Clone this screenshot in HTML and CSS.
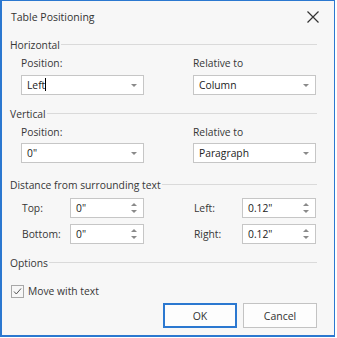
FILE: index.html
```html
<!DOCTYPE html>
<html lang="en">
<head>
  <meta charset="UTF-8">
  <link rel="stylesheet" href="styles.css">
</head>
<body>
  <div class="dialog">
    <div class="titlebar">
      <span class="title">Table Positioning</span>
      <svg class="close" width="12" height="12" viewBox="0 0 12 12">
        <path d="M0.5 0.5 L11.5 11.5 M11.5 0.5 L0.5 11.5" stroke="#333" stroke-width="1.2" fill="none"/>
      </svg>
    </div>

    <div class="content">
      <div class="group-head h-first"><span>Horizontal</span><i></i></div>
      <div class="pair">
        <div class="field">
          <label>Position:</label>
          <div class="combo"><span>Left<b class="caret"></b></span><em class="arrow"></em></div>
        </div>
        <div class="field">
          <label>Relative to</label>
          <div class="combo"><span>Column</span><em class="arrow"></em></div>
        </div>
      </div>

      <div class="group-head h-vert"><span>Vertical</span><i></i></div>
      <div class="pair pair-vert">
        <div class="field">
          <label>Position:</label>
          <div class="combo"><span>0"</span><em class="arrow"></em></div>
        </div>
        <div class="field">
          <label>Relative to</label>
          <div class="combo"><span>Paragraph</span><em class="arrow"></em></div>
        </div>
      </div>

      <div class="group-head h-dist"><span>Distance from surrounding text</span><i></i></div>
      <div class="spins">
        <div class="spin-row">
          <label>Top:</label>
          <div class="spin"><span>0"</span><em class="updown"><b class="up"></b><b class="down"></b></em></div>
        </div>
        <div class="spin-row">
          <label>Left:</label>
          <div class="spin"><span>0.12"</span><em class="updown"><b class="up"></b><b class="down"></b></em></div>
        </div>
        <div class="spin-row">
          <label>Bottom:</label>
          <div class="spin"><span>0"</span><em class="updown"><b class="up"></b><b class="down"></b></em></div>
        </div>
        <div class="spin-row">
          <label>Right:</label>
          <div class="spin"><span>0.12"</span><em class="updown"><b class="up"></b><b class="down"></b></em></div>
        </div>
      </div>

      <div class="group-head h-opt"><span>Options</span><i></i></div>
      <div class="check-row">
        <span class="checkbox">
          <svg width="11" height="11" viewBox="0 0 11 11">
            <path d="M2 5.5 L4.3 8 L9 2.5" stroke="#555" stroke-width="1" fill="none"/>
          </svg>
        </span>
        <span>Move with text</span>
      </div>

      <div class="buttons">
        <button class="btn btn-default">OK</button>
        <button class="btn">Cancel</button>
      </div>
    </div>
  </div>
</body>
</html>
```

FILE: styles.css
```css
* {
  margin: 0;
  padding: 0;
  box-sizing: border-box;
}

body {
  width: 337px;
  height: 338px;
  background: #ffffff;
  font-family: "Open Sans", "Liberation Sans", sans-serif;
  font-size: 10.3px;
  color: #363636;
  overflow: hidden;
}

.dialog {
  width: 335px;
  height: 337px;
  border: 1px solid #2b78d0;
  border-left-width: 2px;
  border-bottom-width: 2px;
  background: #f7f7f7;
  display: flex;
  flex-direction: column;
}

.titlebar {
  height: 32px;
  display: flex;
  align-items: center;
  justify-content: space-between;
  padding: 0 15px 0 9px;
}

.title {
  font-size: 10.5px;
  color: #333;
}

.close {
  display: block;
}

.content {
  padding: 0 17px 0 8px;
  display: flex;
  flex-direction: column;
}

/* section header with rule */
.group-head {
  height: 16px;
  display: flex;
  align-items: center;
  gap: 1px;
  line-height: 16px;
}

.group-head i {
  flex: 1;
  height: 1px;
  background: #dadada;
  margin-top: -1px;
}

.h-first { margin-top: 4px; }
.h-vert { margin-top: 11px; }
.h-dist { margin-top: 14px; }
.h-opt { margin-top: 11px; }

.pair {
  display: grid;
  grid-template-columns: 123px 123px;
  column-gap: 49px;
  padding-left: 11px;
  margin-top: 2px;
}

.field label {
  display: block;
  height: 16px;
  line-height: 16px;
  margin-bottom: 4px;
}

.pair-vert .field label {
  margin-bottom: 3px;
}

.combo,
.spin {
  height: 20px;
  background: #fff;
  border: 1px solid #c6c6c6;
  display: flex;
  align-items: center;
  justify-content: space-between;
  padding: 0 6px 0 5px;
  color: #222;
}

.caret {
  display: inline-block;
  width: 1px;
  height: 13px;
  background: #000;
  vertical-align: -2px;
}

.arrow {
  width: 0;
  height: 0;
  border-left: 3px solid transparent;
  border-right: 3px solid transparent;
  border-top: 3px solid #8a8a8a;
  margin-top: 1px;
}

.spins {
  display: grid;
  grid-template-columns: 123px 123px;
  column-gap: 49px;
  row-gap: 6px;
  padding-left: 11px;
  margin-top: 5px;
}

.spin-row {
  display: flex;
  align-items: center;
  justify-content: space-between;
}

.spin-row label {
  padding-left: 1px;
}

.spin {
  width: 74px;
}

.updown {
  display: flex;
  flex-direction: column;
  gap: 4px;
}

.updown .up,
.updown .down {
  width: 0;
  height: 0;
  border-left: 3px solid transparent;
  border-right: 3px solid transparent;
}

.updown .up { border-bottom: 3px solid #8a8a8a; }
.updown .down { border-top: 3px solid #8a8a8a; }

.check-row {
  margin-top: 12px;
  height: 16px;
  display: flex;
  align-items: center;
  gap: 4px;
  padding-left: 1px;
}

.checkbox {
  width: 13px;
  height: 13px;
  border: 1px solid #a8a8a8;
  background: #f7f7f7;
  display: flex;
  align-items: center;
  justify-content: center;
}

.buttons {
  margin-top: 4px;
  display: flex;
  justify-content: flex-end;
  gap: 6px;
}

.btn {
  width: 74px;
  height: 25px;
  background: #fdfdfd;
  border: 1px solid #c3c3c3;
  font-family: inherit;
  font-size: 10.5px;
  color: #333;
}

.btn-default {
  border: 2px solid #2b78d0;
}
```
